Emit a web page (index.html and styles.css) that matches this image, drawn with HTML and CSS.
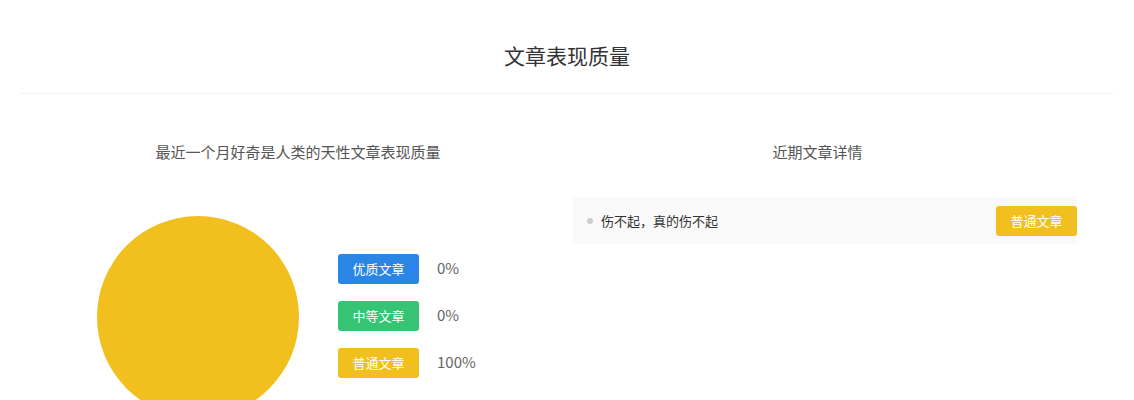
FILE: index.html
```html
<!DOCTYPE html>
<html lang="zh-CN">
<head>
  <meta charset="UTF-8">
  <title>文章表现质量</title>
  <link rel="stylesheet" href="styles.css">
</head>
<body>
  <div class="header">
    <h1 class="title">文章表现质量</h1>
  </div>
  <div class="main">
    <div class="col-left">
      <h2 class="sub-title">最近一个月好奇是人类的天性文章表现质量</h2>
      <div class="chart">
        <div class="pie"></div>
        <ul class="legend">
          <li><span class="tag tag-blue">优质文章</span><span class="pct">0%</span></li>
          <li><span class="tag tag-green">中等文章</span><span class="pct">0%</span></li>
          <li><span class="tag tag-yellow">普通文章</span><span class="pct">100%</span></li>
        </ul>
      </div>
    </div>
    <div class="col-right">
      <h2 class="sub-title right">近期文章详情</h2>
      <ul class="article-list">
        <li class="article">
          <span class="dot"></span>
          <span class="article-name">伤不起，真的伤不起</span>
          <span class="tag tag-yellow">普通文章</span>
        </li>
      </ul>
    </div>
  </div>
</body>
</html>
```

FILE: styles.css
```css
* {
  margin: 0;
  padding: 0;
  box-sizing: border-box;
}
body {
  font-family: "Noto Sans CJK SC", "Noto Sans", sans-serif;
  background: #fff;
  color: #333;
  width: 1134px;
  height: 400px;
  overflow: hidden;
}
ul {
  list-style: none;
}
.header {
  margin: 0 20px;
  height: 94px;
  padding-top: 40px;
  border-bottom: 1px solid #f3f3f3;
  text-align: center;
}
.title {
  font-size: 21px;
  font-weight: normal;
  line-height: 30px;
  color: #333;
}
.main {
  display: grid;
  grid-template-columns: 516px 504px;
  column-gap: 17px;
  padding: 48px 0 0 40px;
}
.sub-title {
  font-size: 15px;
  font-weight: normal;
  line-height: 20px;
  color: #555;
  text-align: center;
}
.sub-title.right {
  padding-right: 15px;
}
.chart {
  display: flex;
  align-items: flex-start;
  margin-top: 54px;
  padding-left: 57px;
}
.pie {
  width: 202px;
  height: 202px;
  border-radius: 50%;
  background: #f2c01e;
  flex-shrink: 0;
}
.legend {
  display: flex;
  flex-direction: column;
  gap: 17px;
  margin: 38px 0 0 39px;
}
.legend li {
  display: flex;
  align-items: center;
}
.tag {
  display: inline-block;
  width: 81px;
  height: 30px;
  line-height: 30px;
  border-radius: 3px;
  font-size: 13px;
  color: #fff;
  text-align: center;
}
.tag-blue {
  background: #2b85e4;
}
.tag-green {
  background: #35c474;
}
.tag-yellow {
  background: #f2c01e;
}
.pct {
  margin: 0 0 3px 18px;
  font-size: 15px;
  color: #666;
}
.article-list {
  margin-top: 35px;
}
.article {
  display: flex;
  align-items: center;
  height: 47px;
  background: #f9f9f9;
  padding-left: 14px;
}
.dot {
  width: 6px;
  height: 6px;
  border-radius: 50%;
  background: #ccc;
  margin-right: 8px;
}
.article-name {
  flex: 1;
  font-size: 13px;
  color: #333;
}
```
